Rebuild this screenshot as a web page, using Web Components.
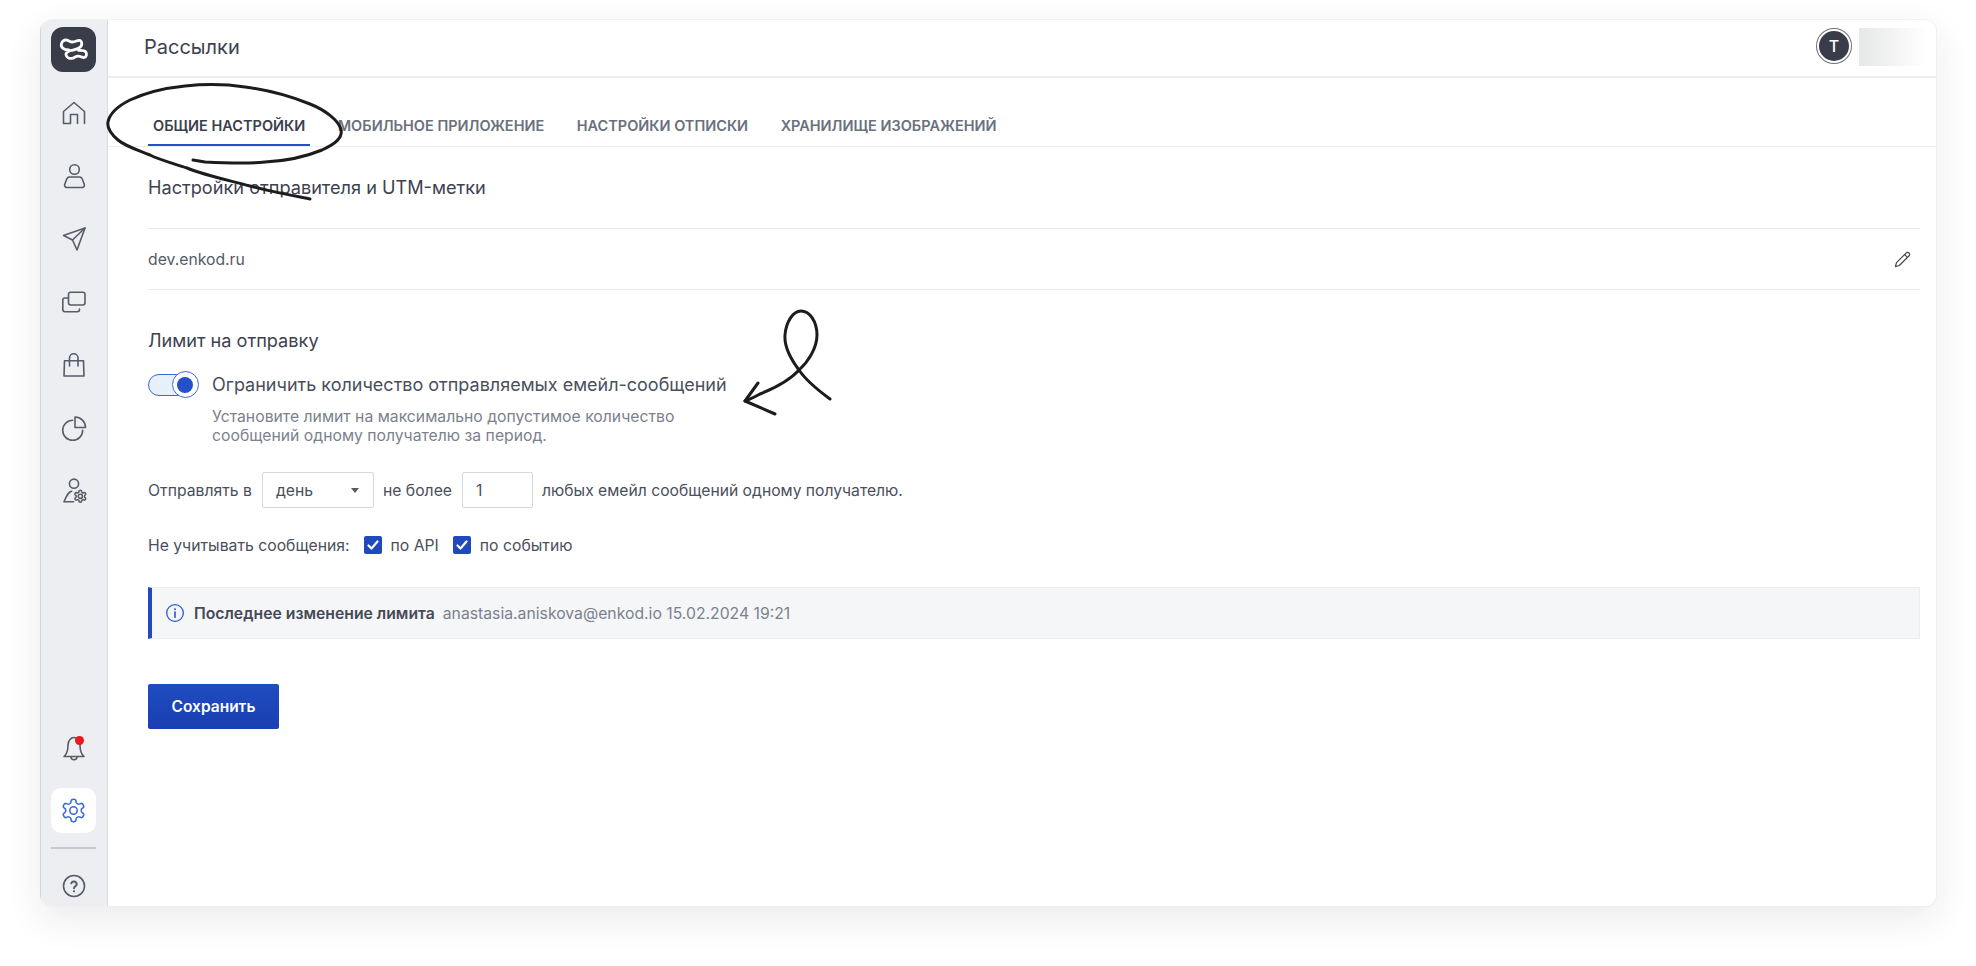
<!DOCTYPE html>
<html lang="ru">
<head>
<meta charset="utf-8">
<title>Рассылки</title>
<style>
	html, body { margin: 0; padding: 0; background: #fff; }
	body { position: relative; width: 1976px; height: 966px; overflow: hidden; font-family: Inter, "Noto Sans", sans-serif; }
</style>
</head>
<body>
<enk-app>
	<enk-sidebar slot="side"></enk-sidebar>
	<enk-header slot="top" title="Рассылки"></enk-header>
	<enk-tabs slot="top"></enk-tabs>
	<enk-settings></enk-settings>
</enk-app>
<enk-scribble></enk-scribble>

<script>
const GEAR = "M12.22 2h-.44a2 2 0 0 0-2 2v.18a2 2 0 0 1-1 1.73l-.43.25a2 2 0 0 1-2 0l-.15-.08a2 2 0 0 0-2.73.73l-.22.38a2 2 0 0 0 .73 2.73l.15.1a2 2 0 0 1 1 1.72v.51a2 2 0 0 1-1 1.74l-.15.09a2 2 0 0 0-.73 2.73l.22.38a2 2 0 0 0 2.73.73l.15-.08a2 2 0 0 1 2 0l.43.25a2 2 0 0 1 1 1.73V20a2 2 0 0 0 2 2h.44a2 2 0 0 0 2-2v-.18a2 2 0 0 1 1-1.73l.43-.25a2 2 0 0 1 2 0l.15.08a2 2 0 0 0 2.73-.73l.22-.39a2 2 0 0 0-.73-2.73l-.15-.08a2 2 0 0 1-1-1.74v-.5a2 2 0 0 1 1-1.74l.15-.09a2 2 0 0 0 .73-2.73l-.22-.38a2 2 0 0 0-2.73-.73l-.15.08a2 2 0 0 1-2 0l-.43-.25a2 2 0 0 1-1-1.73V4a2 2 0 0 0-2-2z";

const ICONS = {
	home: `<path d="M22.500 22.500V10.500L12 1.500L1.500 10.500V22.500H8.500V13.500H15.500V22.500"/>`,
	user: `<circle cx="12.500" cy="5.500" r="4.800"/><path d="M7.500 13h10c1.300 0 2.300.8 2.800 2l2 5.500c.5 1.500-.5 3-2 3H4.700c-1.500 0-2.500-1.500-2-3l2-5.500c.5-1.200 1.500-2 2.800-2z"/>`,
	send: `<path d="M23 1L1.500 8.500l9 4.500 4.500 10z"/><path d="M23 1L10.500 13"/>`,
	copy: `<rect x="6.500" y="2.300" width="16.500" height="12.700" rx="2.200"/><path d="M6 8H3A2.200 2.200 0 0 0 .8 10.200v9.300A2.200 2.200 0 0 0 3 21.700h12.300a2.200 2.200 0 0 0 2.200-2.200V19"/>`,
	bag: `<path d="M2.500 7.800h19l.5 15.200H2z"/><path d="M7.500 13V5a4 4 0 0 1 8.500 0v8"/>`,
	pie: `<path d="M10.700 4.300A10 10 0 1 0 20.700 14.300"/><path d="M13 1A10.500 10.500 0 0 1 23.500 11.500H13z"/>`,
	usergear: `<circle cx="12" cy="4.700" r="4.600"/><path d="M9.700 12.200C6 12.800 4.500 17 2 22.700H11.500"/><g transform="translate(11.100 10.100) scale(.6)" stroke-width="2.600"><path d="${GEAR}"/><circle cx="12" cy="12" r="3.500"/></g>`,
	bell: `<path d="M6 9a6 7.500 0 0 1 12 0c0 6 1 9 4 11.500H2C5 18 6 15 6 9z"/><path d="M9 20.800a3 3 0 0 0 6 0"/>`,
	gear: `<path d="${GEAR}"/><circle cx="12" cy="12" r="3.300"/>`,
	help: `<circle cx="12" cy="12" r="10.500"/><path d="M9.300 9.300a2.800 2.800 0 0 1 5.400.9c0 1.900-2.700 2.300-2.700 4" stroke-width="2"/><path d="M12 17.300h.01" stroke-width="2.200"/>`,
	pencil: `<path d="M17 3a2.850 2.830 0 1 1 4 4L7.500 20.500 2 22l1.500-5.500Z"/><path d="m15 5 4 4"/>`,
	info: `<circle cx="12" cy="12" r="10"/><path d="M12 11v6" stroke-width="2"/><path d="M12 7.500h.01" stroke-width="2.400"/>`
};

/////////////////////////////////////////////// Icon ///////////////////////////////////////////////

class EnkIcon extends HTMLElement {
	constructor(...args) {
		super(...args);
		this._shadow = this.attachShadow({ mode: 'open' });
	}

	connectedCallback() {
		const size = this.getAttribute("size") || 24;
		const width = this.getAttribute("stroke") || 1.6;
		this._shadow.innerHTML = `
		<style>
			:host { display: inline-flex; width: ${size}px; height: ${size}px; color: inherit; }
			svg { width: 100%; height: 100%; display: block; overflow: visible; fill: none; stroke: currentColor; stroke-width: ${width}; stroke-linecap: round; stroke-linejoin: round; }
		</style>
		<svg viewBox="0 0 24 24">${ICONS[this.getAttribute("name")]}</svg>`;
	}
}
customElements.define("enk-icon", EnkIcon);

/////////////////////////////////////////////// Shell //////////////////////////////////////////////

const appTemplate = document.createElement("template");
appTemplate.innerHTML = `
<style>
	:host {
		display: flex;
		box-sizing: border-box;
		width: 1897px;
		height: 888px;
		margin: 19px 40px 0;
		background: #fff;
		border-radius: 12px;
		border: 1px solid #eef0f4;
		border-left: 0;
		border-top-color: #f1f2f5;
		box-shadow: 0 12px 36px rgba(30, 34, 45, .09);
		overflow: hidden;
	}
	main { flex: 1; min-width: 0; display: flex; flex-direction: column; }
</style>
<slot name="side"></slot>
<main>
	<slot name="top"></slot>
	<slot></slot>
</main>
`;
class EnkApp extends HTMLElement {
	constructor(...args) {
		super(...args);
		this._shadow = this.attachShadow({ mode: 'open' });
		this._shadow.appendChild(appTemplate.content.cloneNode(true));
	}
}
customElements.define("enk-app", EnkApp);

////////////////////////////////////////////// Sidebar /////////////////////////////////////////////

const sidebarTemplate = document.createElement("template");
sidebarTemplate.innerHTML = `
<style>
	:host {
		display: flex;
		flex-direction: column;
		align-items: center;
		flex: none;
		box-sizing: border-box;
		width: 68px;
		height: 100%;
		padding: 7px 1px 0 0;
		background: #eceef2;
		border-left: 1px solid #d3d6dc;
		border-right: 1px solid #d9dbe1;
		color: #575c69;
	}
	.logo { width: 45px; height: 45px; background: #393c49; border-radius: 12px; margin-bottom: 18px; flex: none; }
	.logo svg { display: block; fill: none; stroke: #fff; stroke-width: 3; stroke-linecap: round; stroke-linejoin: round; }
	.item { position: relative; width: 45px; height: 45px; margin-bottom: 18px; display: flex; align-items: center; justify-content: center; flex: none; border-radius: 10px; }
	.spacer { flex: 1; }
	.active { background: #fff; color: #3f6be0; margin-bottom: 14px; }
	.rule { width: 45px; height: 2px; background: #c5c9d0; flex: none; margin-bottom: 17px; }
	.help { height: 40px; margin: 0; }
	.dot { position: absolute; top: 11px; right: 12px; width: 9px; height: 9px; background: #e81a1c; border-radius: 50%; }
</style>
<div class="logo">
	<svg width="45" height="45" viewBox="0 0 48 48"><path d="M19 24.500C14 24.500 10.500 22 11 18.500C11.500 15 14 13.500 17 14C19 14.400 20 16 23 16C26 16 28 14 30 14.200C33 14.500 33.500 18 32 20.500C30.500 23 26 24 22 25C18 26 15.500 27 16 29.500C16.500 32 19 33.800 22 33.500C25 33.200 26 31 29 31C32 31 33.500 33 35.500 32.500C38 32 38.500 28.500 37 26.500C35.500 25 33 24.800 29.500 25"/></svg>
</div>
<div class="item"><enk-icon name="home"></enk-icon></div>
<div class="item"><enk-icon name="user"></enk-icon></div>
<div class="item"><enk-icon name="send"></enk-icon></div>
<div class="item"><enk-icon name="copy"></enk-icon></div>
<div class="item"><enk-icon name="bag"></enk-icon></div>
<div class="item"><enk-icon name="pie"></enk-icon></div>
<div class="item"><enk-icon name="usergear"></enk-icon></div>
<div class="spacer"></div>
<div class="item"><enk-icon name="bell"></enk-icon><span class="dot"></span></div>
<div class="item active"><enk-icon name="gear" size="27" stroke="1.400"></enk-icon></div>
<div class="rule"></div>
<div class="item help"><enk-icon name="help"></enk-icon></div>
`;
class EnkSidebar extends HTMLElement {
	constructor(...args) {
		super(...args);
		this._shadow = this.attachShadow({ mode: 'open' });
		this._shadow.appendChild(sidebarTemplate.content.cloneNode(true));
	}
}
customElements.define("enk-sidebar", EnkSidebar);

////////////////////////////////////////////// Header //////////////////////////////////////////////

const headerTemplate = document.createElement("template");
headerTemplate.innerHTML = `
<style>
	:host {
		display: flex;
		align-items: center;
		box-sizing: border-box;
		height: 58px;
		padding: 0 10px 2px 36px;
		border-bottom: 2px solid #eceef3;
		font-size: 20px;
		color: #3d4250;
	}
	h1 { margin: 0; font: inherit; flex: 1; }
	.avatar {
		width: 30px; height: 30px; border-radius: 50%;
		background: #393c49; color: #fff;
		display: flex; align-items: center; justify-content: center;
		font-size: 16px; font-weight: 500;
		border: 2px solid #fff;
		box-shadow: 0 0 0 1px #6d7078;
		margin-top: 9px;
		align-self: flex-start;
	}
	.blur { width: 67px; height: 38px; margin: 8px 0 0 8px; align-self: flex-start; background: linear-gradient(90deg, #e6e7e7, #fff); }
</style>
<h1></h1>
<div class="avatar">T</div>
<div class="blur"></div>
`;
class EnkHeader extends HTMLElement {
	constructor(...args) {
		super(...args);
		this._shadow = this.attachShadow({ mode: 'open' });
		this._shadow.appendChild(headerTemplate.content.cloneNode(true));
	}

	connectedCallback() {
		this._shadow.querySelector("h1").textContent = this.getAttribute("title");
	}
}
customElements.define("enk-header", EnkHeader);

/////////////////////////////////////////////// Tabs ///////////////////////////////////////////////

const tabsTemplate = document.createElement("template");
tabsTemplate.innerHTML = `
<style>
	:host {
		display: flex;
		align-items: flex-end;
		gap: 22.500px;
		box-sizing: border-box;
		height: 69px;
		padding-left: 40px;
		border-bottom: 1px solid #eceef5;
		font-size: 14.500px;
		font-weight: 600;
		color: #6a707d;
	}
	span { display: block; padding: 0 5px; height: 27px; line-height: 18px; white-space: nowrap; border-bottom: 2px solid transparent; }
	.on { color: #3b404d; border-bottom-color: #2450c8; }
</style>
<span class="on">ОБЩИЕ НАСТРОЙКИ</span>
<span>МОБИЛЬНОЕ ПРИЛОЖЕНИЕ</span>
<span>НАСТРОЙКИ ОТПИСКИ</span>
<span>ХРАНИЛИЩЕ ИЗОБРАЖЕНИЙ</span>
`;
class EnkTabs extends HTMLElement {
	constructor(...args) {
		super(...args);
		this._shadow = this.attachShadow({ mode: 'open' });
		this._shadow.appendChild(tabsTemplate.content.cloneNode(true));
	}
}
customElements.define("enk-tabs", EnkTabs);

///////////////////////////////////////////// Settings /////////////////////////////////////////////

const settingsTemplate = document.createElement("template");
settingsTemplate.innerHTML = `
<style>
	:host {
		display: block;
		padding: 0 16px 0 40px;
		font-size: 15.750px;
		color: #4a4f5c;
	}
	.title { font-size: 18.150px; line-height: 24px; color: #3d4250; }
	.title.first { margin-top: 28px; }
	.site {
		display: flex; align-items: center; justify-content: space-between;
		box-sizing: border-box; height: 62px; margin-top: 29px; padding: 1px 9px 0 0;
		border-top: 1px solid #e8e9ee; border-bottom: 1px solid #e8e9ee;
		color: #555a66;
	}
	.site enk-icon { color: #454a56; }
	.title.limit { margin-top: 38px; }
	.toggle-row { display: flex; align-items: center; gap: 14px; margin-top: 19px; height: 27px; font-size: 18px; color: #4a4f5c; }
	.hint { margin: 9px 0 0 64px; line-height: 19px; color: #7b818d; }
	.send { display: flex; align-items: center; margin-top: 27px; height: 36px; }
	.box {
		box-sizing: border-box; height: 36px; display: flex; align-items: center;
		border: 1px solid #d5d8de; border-radius: 2px; padding: 0 13px; color: #4a4f5c;
	}
	.select { width: 112px; justify-content: space-between; margin: 0 9px 0 10px; }
	.select i { width: 0; height: 0; border: 4px solid transparent; border-top: 5px solid #555a66; border-bottom: 0; margin-right: 1px; }
	.num { width: 71px; margin: 0 9px 0 10px; }
	.rest { font-size: 15.700px; }
	.checks { display: flex; align-items: center; height: 20px; margin-top: 27px; }
	.checks enk-check:first-of-type { margin-left: 14px; }
	.checks enk-check + enk-check { margin-left: 14px; }
	.note {
		box-sizing: border-box; display: flex; align-items: center; height: 52px; margin-top: 32px;
		background: #f5f6f8; border: 1px solid #edeef2; border-left: 4px solid #2048c4;
		padding-left: 13px; color: #7b818d;
	}
	.note enk-icon { color: #2f5ccf; margin-right: 9px; }
	.note b { font-weight: 600; color: #454a56; margin-right: 8px; }
	.save {
		display: flex; align-items: center; justify-content: center;
		width: 131px; height: 45px; margin-top: 45px; border-radius: 2px;
		background: linear-gradient(180deg, #1f4cc0, #1a3fb2);
		color: #fff; font-size: 15.500px; font-weight: 600;
	}
</style>
<div class="title first">Настройки отправителя и UTM-метки</div>
<div class="site"><span>dev.enkod.ru</span><enk-icon name="pencil" size="17" stroke="1.700"></enk-icon></div>
<div class="title limit">Лимит на отправку</div>
<div class="toggle-row"><enk-toggle></enk-toggle><span>Ограничить количество отправляемых емейл-сообщений</span></div>
<div class="hint">Установите лимит на максимально допустимое количество<br>сообщений одному получателю за период.</div>
<div class="send">
	<span>Отправлять в</span>
	<div class="box select"><span>день</span><i></i></div>
	<span>не более</span>
	<div class="box num">1</div>
	<span class="rest">любых емейл сообщений одному получателю.</span>
</div>
<div class="checks">
	<span>Не учитывать сообщения:</span>
	<enk-check>по API</enk-check>
	<enk-check>по событию</enk-check>
</div>
<div class="note"><enk-icon name="info" size="20"></enk-icon><b>Последнее изменение лимита</b><span>anastasia.aniskova@enkod.io 15.02.2024 19:21</span></div>
<div class="save">Сохранить</div>
`;
class EnkSettings extends HTMLElement {
	constructor(...args) {
		super(...args);
		this._shadow = this.attachShadow({ mode: 'open' });
		this._shadow.appendChild(settingsTemplate.content.cloneNode(true));
	}
}
customElements.define("enk-settings", EnkSettings);

////////////////////////////////////////// Toggle / Check //////////////////////////////////////////

const toggleTemplate = document.createElement("template");
toggleTemplate.innerHTML = `
<style>
	:host {
		display: flex; align-items: center; justify-content: flex-end; flex: none;
		box-sizing: border-box; width: 50px; height: 22px;
		background: #e8f0fb; border: 1.500px solid #3f68d6; border-radius: 11px;
	}
	.knob {
		box-sizing: border-box; flex: none; width: 27px; height: 27px; margin-right: -1.500px;
		background: #fff; border: 1.500px solid #3f68d6; border-radius: 50%;
		display: flex; align-items: center; justify-content: center;
	}
	.knob::after { content: ""; width: 16px; height: 16px; border-radius: 50%; background: #2450c8; }
</style>
<div class="knob"></div>
`;
class EnkToggle extends HTMLElement {
	constructor(...args) {
		super(...args);
		this._shadow = this.attachShadow({ mode: 'open' });
		this._shadow.appendChild(toggleTemplate.content.cloneNode(true));
	}
}
customElements.define("enk-toggle", EnkToggle);

const checkTemplate = document.createElement("template");
checkTemplate.innerHTML = `
<style>
	:host { display: inline-flex; align-items: center; gap: 9px; }
	svg { display: block; width: 18px; height: 18px; border-radius: 2px; background: #1f49bd; fill: none; stroke: #fff; stroke-width: 2.200; stroke-linecap: round; stroke-linejoin: round; }
</style>
<svg viewBox="0 0 18 18"><path d="M4.500 9.500l3 3 6-7"/></svg>
<slot></slot>
`;
class EnkCheck extends HTMLElement {
	constructor(...args) {
		super(...args);
		this._shadow = this.attachShadow({ mode: 'open' });
		this._shadow.appendChild(checkTemplate.content.cloneNode(true));
	}
}
customElements.define("enk-check", EnkCheck);

///////////////////////////////////////// Hand-drawn marks /////////////////////////////////////////

const scribbleTemplate = document.createElement("template");
scribbleTemplate.innerHTML = `
<style>
	:host { position: absolute; left: 0; top: 0; width: 1976px; height: 966px; pointer-events: none; }
	svg { display: block; fill: none; stroke: #1c1c1c; stroke-width: 3; stroke-linecap: round; stroke-linejoin: round; }
</style>
<svg width="1976" height="966" viewBox="0 0 1976 966">
	<path d="M310 199C290 195 268 191 250 186C228 180 207 176 187 168C172 163 160 160 150 155C135 149 125 146 118 140C110 133 107 127 108 122C110 112 120 105 130 100C145 93 165 88 185 86C205 84 225 84 245 87C268 90 290 96 310 104C325 110 338 120 341 129C343 138 335 144 322 150C305 157 285 161 265 162C245 164 225 163 205 162L193 160"/>
	<path d="M830 399C815 388 805 379 799 370C790 358 784 347 785 335C786 322 793 311 801 311C810 311 817 322 817 335C817 348 808 362 799 370C790 380 775 388 760 394C755 397 750 399 745 401"/>
	<path d="M758 383L745 401L775 414"/>
</svg>
`;
class EnkScribble extends HTMLElement {
	constructor(...args) {
		super(...args);
		this._shadow = this.attachShadow({ mode: 'open' });
		this._shadow.appendChild(scribbleTemplate.content.cloneNode(true));
	}
}
customElements.define("enk-scribble", EnkScribble);
</script>
</body>
</html>
